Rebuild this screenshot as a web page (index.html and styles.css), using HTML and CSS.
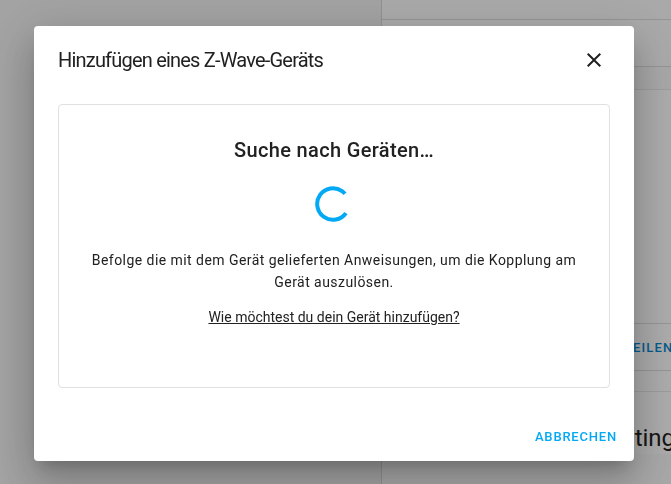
FILE: index.html
```html
<!DOCTYPE html>
<html lang="de">
<head>
    <meta charset="UTF-8">
    <meta name="viewport" content="width=device-width, initial-scale=1.0">
    <title>Z-Wave</title>
    <link rel="stylesheet" href="styles.css">
</head>
<body>
    <!-- page behind the dialog -->
    <div class="page">
        <div class="sidebar"></div>
        <div class="main">
            <div class="strip-top"></div>
            <div class="strip"></div>
            <div class="card">
                <div class="card-content"></div>
                <div class="card-actions">
                    <span class="page-btn">NETZWERK HEILEN</span>
                </div>
            </div>
            <div class="card">
                <div class="card-title">Z-Wave Routing-Tabelle</div>
            </div>
        </div>
    </div>

    <!-- dialog -->
    <div class="scrim">
        <div class="dialog">
            <div class="dialog-header">
                <div class="dialog-title">Hinzufügen eines Z-Wave-Geräts</div>
                <button class="close-btn" aria-label="Schließen">
                    <svg viewBox="0 0 24 24" width="24" height="24">
                        <path fill="currentColor" d="M19,6.41L17.59,5L12,10.59L6.41,5L5,6.41L10.59,12L5,17.59L6.41,19L12,13.41L17.59,19L19,17.59L13.41,12L19,6.41Z"/>
                    </svg>
                </button>
            </div>
            <div class="dialog-body">
                <div class="search-box">
                    <h3 class="search-title">Suche nach Geräten…</h3>
                    <svg class="spinner" viewBox="0 0 36 36" width="36" height="36">
                        <circle cx="18" cy="18" r="15.8" fill="none" stroke="#03a9f4" stroke-width="4"
                                stroke-dasharray="78 100" transform="rotate(35 18 18)"/>
                    </svg>
                    <p class="search-text">Befolge die mit dem Gerät gelieferten Anweisungen, um die Kopplung am Gerät auszulösen.</p>
                    <a class="search-link" href="#">Wie möchtest du dein Gerät hinzufügen?</a>
                </div>
            </div>
            <div class="dialog-actions">
                <button class="text-btn">Abbrechen</button>
            </div>
        </div>
    </div>
</body>
</html>
```

FILE: styles.css
```css
/* Base styles */
body {
    margin: 0;
    font-family: Roboto, "Noto Sans", sans-serif;
    color: #212121;
    background: #f2f2f2;
    overflow: hidden;
}

.page {
    display: flex;
    height: 100vh;
}

.sidebar {
    width: 381px;
    flex-shrink: 0;
    border-right: 1px solid #d6d6d6;
    background: #f0f0f0;
}

.main {
    flex: 1;
    display: flex;
    flex-direction: column;
    min-width: 0;
    background: #f7f7f7;
}

.strip-top {
    height: 19px;
    background: #fafafa;
    border-bottom: 1px solid #dcdcdc;
}

.strip {
    height: 46px;
    background: #fafafa;
    border-bottom: 1px solid #dcdcdc;
    margin-bottom: 22px;
}

.card {
    background: #fcfcfc;
    border-top: 1px solid #e6e6e6;
    white-space: nowrap;
}

.card-content {
    height: 233px;
    border-bottom: 1px solid #dcdcdc;
}

.card-actions {
    height: 46px;
    border-bottom: 1px solid #dcdcdc;
    display: flex;
    align-items: center;
    padding-left: 160px;
    margin-bottom: 20px;
}

.page-btn {
    font-size: 13px;
    font-weight: 500;
    letter-spacing: 1.1px;
    color: #0288d1;
}

.card-title {
    padding: 30px 0 0 126px;
    font-size: 24px;
    line-height: 32px;
    color: #212121;
}

/* Dialog */
.scrim {
    position: fixed;
    inset: 0;
    background: rgba(0, 0, 0, 0.32);
    display: flex;
    justify-content: center;
    align-items: center;
}

.dialog {
    width: 600px;
    height: 435px;
    background: #fff;
    border-radius: 4px;
    box-shadow: 0 11px 15px -7px rgba(0, 0, 0, 0.2),
                0 24px 38px 3px rgba(0, 0, 0, 0.14),
                0 9px 46px 8px rgba(0, 0, 0, 0.12);
    display: flex;
    flex-direction: column;
    margin: 3px 3px 0 0;
}

.dialog-header {
    display: flex;
    align-items: center;
    justify-content: space-between;
    padding: 10px 28px 0 24px;
    height: 48px;
}

.dialog-title {
    font-size: 20px;
    line-height: 24px;
    letter-spacing: -0.8px;
    color: #212121;
}

.close-btn {
    background: none;
    border: none;
    padding: 0;
    width: 24px;
    height: 24px;
    color: #212121;
    cursor: pointer;
}

.dialog-body {
    padding: 20px 24px 0;
}

.search-box {
    height: 282px;
    border: 1px solid #e0e0e0;
    border-radius: 4px;
    display: flex;
    flex-direction: column;
    align-items: center;
    text-align: center;
}

.search-title {
    margin: 31px 0 22px;
    font-size: 20px;
    line-height: 28px;
    font-weight: 500;
    letter-spacing: 0.35px;
}

.spinner {
    display: block;
    margin-right: 3px;
}

.search-text {
    margin: 27px 24px 0;
    font-size: 14px;
    line-height: 22px;
    letter-spacing: 0.45px;
}

.search-link {
    margin-top: 14px;
    font-size: 14px;
    line-height: 20px;
    color: #212121;
}

.dialog-actions {
    margin-top: auto;
    display: flex;
    justify-content: flex-end;
    padding: 0 8px 8px;
}

.text-btn {
    height: 36px;
    padding: 0 9px;
    background: none;
    border: none;
    font-family: inherit;
    font-size: 13px;
    font-weight: 500;
    letter-spacing: 0.8px;
    text-transform: uppercase;
    color: #03a9f4;
    cursor: pointer;
    margin-bottom: -1px;
}
```
